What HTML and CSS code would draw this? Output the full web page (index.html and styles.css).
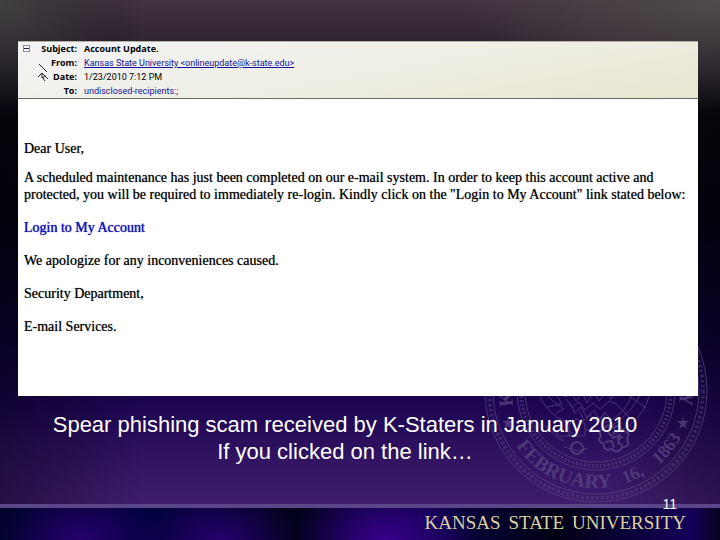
FILE: index.html
```
<!DOCTYPE html>
<html lang="en">
<head>
  <meta charset="UTF-8">
  <meta name="viewport" content="width=device-width, initial-scale=1.0">
  <title>Spear phishing scam</title>
  <link rel="stylesheet" href="styles.css">
</head>
<body>
  <main class="slide">
    <!-- university seal, sits behind the content -->
    <svg class="seal" viewBox="0 0 224 224" aria-hidden="true">
      <defs>
        <path id="sealArc" d="M15 112a97 97 0 0 0 194 0"/>
      </defs>
      <g fill="none" stroke="currentColor">
        <circle cx="112" cy="112" r="111"/>
        <circle cx="112" cy="112" r="107" stroke-width="4" stroke-dasharray="3 2" opacity=".6"/>
        <circle cx="112" cy="112" r="103"/>
        <circle cx="112" cy="112" r="79"/>
        <circle cx="112" cy="112" r="75" stroke-width="4" stroke-dasharray="2 2" opacity=".7"/>
        <circle cx="112" cy="112" r="71"/>
        <path d="M54 113q8 22 28 30M58 112q10 10 22 18l-8 4M63 128l15-3-6-10M72 111l10 7 5-5 5 9 6-8 5 10 7-11 5 9 8-10 4 8 8-9 5 5M82 120l6 8 7-5 6 8 8-7 7 6 9-8 8 3M96 133l4 9 6-7 7 9 8-10 7 7M149 112q-5 22-28 32M158 111q-8 23-34 38M166 112q-4 28-35 43M144 116l18 13M133 126l15 15"/>
        <path d="M76 108l6 6 5-6 6 9 5-8 6 9 6-9 6 8 6-8 7 7 6-7M86 124l5 10 6-6 6 11 7-8 5 10 7-9"/>
        <path d="M72 152h14l4 5h-16zM85 145l8-5 8 5v12H85zM101 151h14M62 146q8 12 18 16M80 168l15 4 8-3"/>
        <circle cx="93" cy="169" r="6" stroke-width="2"/>
        <path d="M119 151q5-8 10-2 8-5 9 3 9 0 5 8 4 8-5 8-4 8-10 2-9 3-8-5-8-3-3-8-3-6 2-6zM124 153l5 6 7-3-2 8 5 2M121 163l7-1 2 7M131 150l-2 6M139 158l-6 2" stroke-width="2"/>
      </g>
      <g class="seal-text">
        <text><textPath href="#sealArc" startOffset="58">FEBRUARY</textPath></text>
        <text class="seal-date"><textPath href="#sealArc" startOffset="181">16,</textPath></text>
        <text class="seal-date"><textPath href="#sealArc" startOffset="220">1863</textPath></text>
        <text transform="translate(29 127) rotate(-96)">K</text>
        <text transform="translate(196 112) rotate(94)">Y</text>
      </g>
      <path fill="currentColor" d="M24 138l1 4h5l-4 3 2 5-4-3-4 3 2-5-4-3h5zM199 138l1 4h5l-4 3 2 5-4-3-4 3 2-5-4-3h5z"/>
    </svg>

    <article class="email">
      <header class="email-header">
        <button class="collapse" type="button" aria-label="Collapse headers">
          <svg viewBox="0 0 5 5" width="5" height="5"><path d="M0 2h5v1H0z" fill="#223"/></svg>
        </button>
        <svg class="cursor" viewBox="0 0 10 18" width="10" height="18">
          <path d="M1 1l8 8M0 14l4-4 6 6M4 10v5l4-2M5 15l2 3" fill="none" stroke="#222"/>
        </svg>
        <dl class="fields">
          <dt>Subject:</dt>
          <dd class="subject">Account Update.</dd>
          <dt>From:</dt>
          <dd><a href="#">Kansas State University &lt;onlineupdate@k-state.edu&gt;</a></dd>
          <dt>Date:</dt>
          <dd>1/23/2010 7:12 PM</dd>
          <dt>To:</dt>
          <dd class="recipient">undisclosed-recipients:;</dd>
        </dl>
      </header>
      <div class="email-body">
        <p class="greeting">Dear User,</p>
        <p>A scheduled maintenance has just been completed on our e-mail system. In order to keep this account active and<br>
          protected, you will be required to immediately re-login. Kindly click on the "Login to My Account" link stated below:</p>
        <p><a class="login-link" href="#">Login to My Account</a></p>
        <p>We apologize for any inconveniences caused.</p>
        <p>Security Department,</p>
        <p>E-mail Services.</p>
      </div>
    </article>

    <p class="caption">Spear phishing scam received by K-Staters in January 2010<br>If you clicked on the link…</p>

    <footer class="footer">
      <span class="page-number">11</span>
      <div class="wordmark">
        <span>KANSAS</span>
        <span>STATE</span>
        <span>UNIVERSITY</span>
      </div>
    </footer>
  </main>
</body>
</html>
```
FILE: styles.css
```
body {
  margin: 0;
  background: #05030f;
}
.slide {
  position: relative;
  isolation: isolate;
  box-sizing: border-box;
  min-height: 100vh;
  padding-top: 41px;
  display: flex;
  flex-direction: column;
  overflow: hidden;
  background:
    radial-gradient(ellipse 260px 110px at 100% 0, #504b4b, transparent),
    radial-gradient(ellipse 120px 110px at 0 0, #424042, transparent),
    linear-gradient(to right, rgba(0, 0, 10, 0.4), transparent 20%, transparent 85%, rgba(0, 0, 10, 0.3)),
    linear-gradient(#423341 0, #2f2230 8%, #08070c 22%, #02020c 40%, #0c0230 62%, #1d0552 75%, #2f1260 84%, #3f1c6c 93%);
}

/* seal */
.seal {
  position: absolute;
  z-index: -1;
  right: 12px;
  bottom: 37px;
  width: 224px;
  height: 224px;
  color: #55437f;
  opacity: 0.8;
}
.seal-text {
  font-family: "Liberation Serif", serif;
  font-size: 20px;
  font-weight: bold;
  fill: currentColor;
}
.seal-date {
  font-size: 18px;
}

/* email */
.email {
  margin: 0 22px 0 18px;
  background: #fff;
  color: #000;
}
.email-header {
  position: relative;
  border-top: 1px solid #b5b1a5;
  border-bottom: 1px solid #6e6b62;
  background: linear-gradient(170deg, #f3f3f5 0, #efefe6 50%, #e8e6cf);
  font-family: "Open Sans", "Noto Sans", sans-serif;
  font-size: 9px;
  line-height: 14px;
}
.collapse {
  position: absolute;
  top: 3px;
  left: 5px;
  display: flex;
  padding: 0;
  border: 1px solid #8291ae;
  border-radius: 0;
  background: #f4f5fa;
}
.cursor {
  position: absolute;
  top: 21px;
  left: 20px;
}
.fields {
  display: grid;
  grid-template-columns: 59px 1fr;
  column-gap: 7px;
  margin: 0;
}
.fields dt {
  font-weight: bold;
  text-align: right;
}
.fields dd {
  margin: 0;
  font-family: Roboto, "Liberation Sans", sans-serif;
}
.fields .subject {
  font-family: inherit;
  font-weight: bold;
}
.fields a {
  color: #1414a0;
}
.fields .recipient {
  color: #1414a0;
}
.email-body {
  display: flex;
  flex-direction: column;
  gap: 16px;
  padding: 41px 6px 61px;
  font-family: "Liberation Serif", "Times New Roman", serif;
  font-size: 14px;
  line-height: 17px;
  text-shadow: 0 0 1px rgba(0, 0, 0, 0.6);
}
.email-body p {
  margin: 0;
}
.email-body .greeting {
  margin-bottom: -4px;
}
.login-link {
  color: #1212b4;
  text-decoration: none;
  text-shadow: 0 0 1px #1212b4;
}

/* caption */
.caption {
  margin: 15px 30px 0 0;
  color: #fff;
  font-family: "Liberation Sans", Arial, sans-serif;
  font-size: 22px;
  line-height: 27px;
  text-align: center;
}

/* footer */
.footer {
  position: relative;
  margin-top: auto;
  border-top: 4px solid #5b468a;
  padding: 3px 34px 5px;
  background:
    radial-gradient(ellipse 80px 50px at 80px 100%, #25006c, transparent),
    radial-gradient(ellipse 80px 50px at 220px 100%, #25006c, transparent),
    radial-gradient(ellipse 90px 60px at 385px 100%, #38008c, transparent),
    linear-gradient(to right, #02022c, #040242 20%, #02021a 40%, #0a0248 60%, #010114 77%, #15005a 96%, #06021c);
}
.wordmark {
  display: flex;
  justify-content: flex-end;
  gap: 8px;
  color: #d8d2a0;
  font-family: "Liberation Serif", serif;
  font-size: 19px;
  line-height: 24px;
}
.page-number {
  position: absolute;
  top: -12px;
  right: 43px;
  color: #fff;
  font-family: "Liberation Sans", Arial, sans-serif;
  font-size: 14px;
  line-height: 16px;
}
```
